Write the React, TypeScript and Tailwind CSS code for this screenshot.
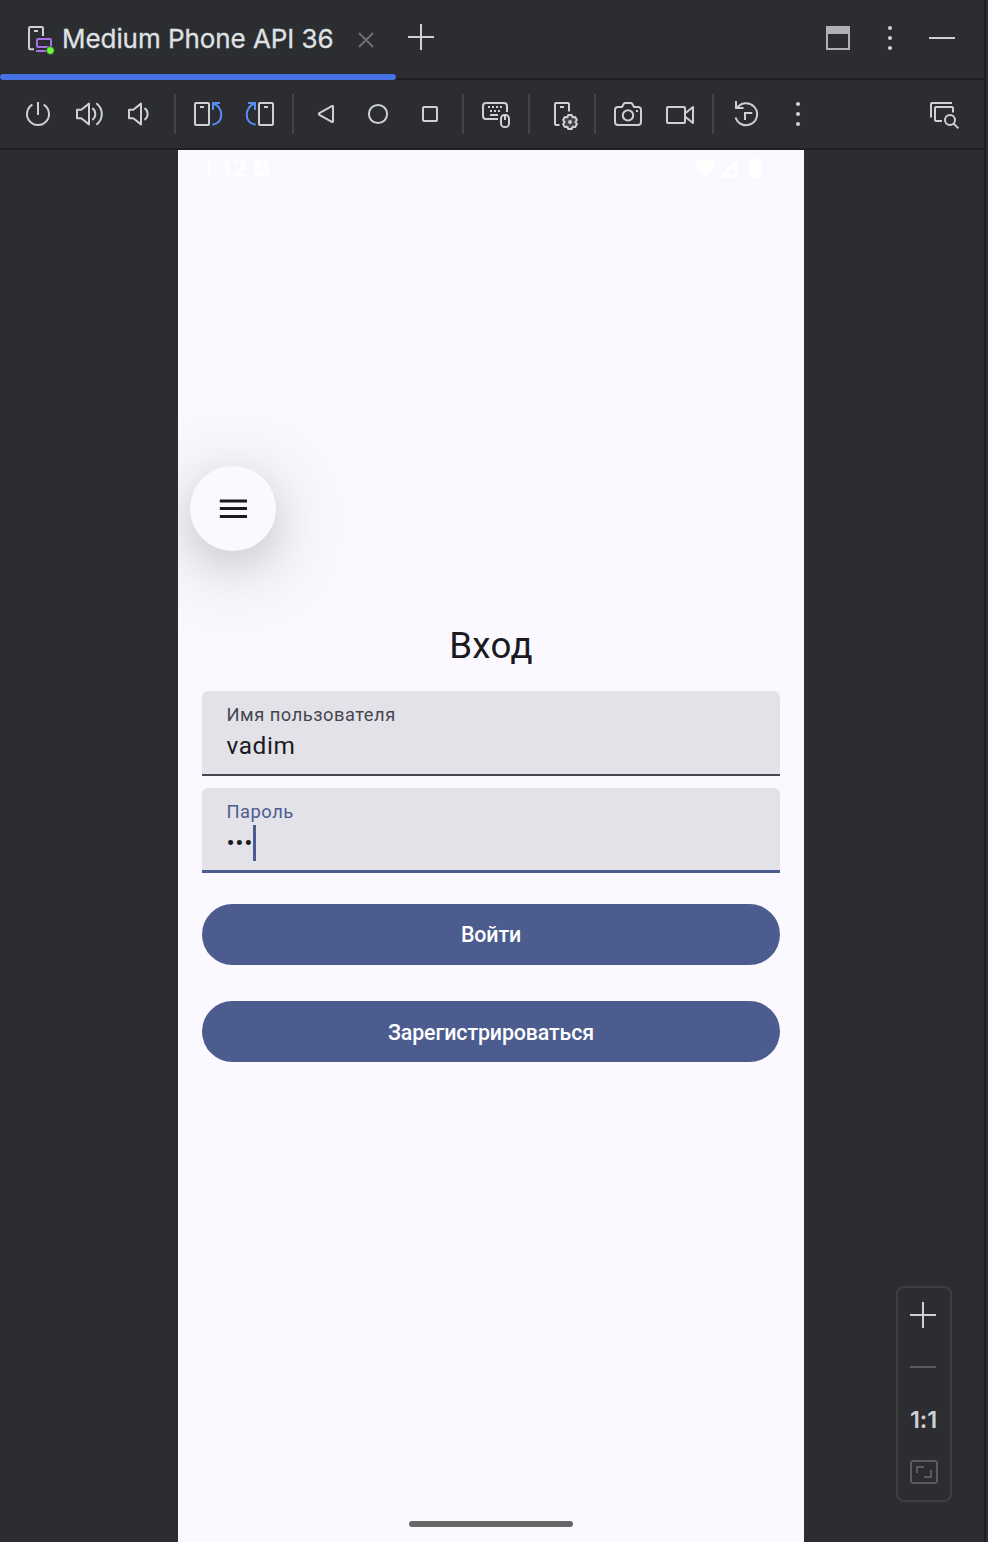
import type { ReactNode } from "react";

function Icon({ children, className = "text-[#ced0d6]" }: { children: ReactNode; className?: string }) {
  return (
    <svg
      viewBox="0 0 32 32"
      fill="none"
      stroke="currentColor"
      strokeWidth="2"
      className={`h-8 w-8 shrink-0 ${className}`}
    >
      {children}
    </svg>
  );
}

function Dots() {
  return (
    <Icon>
      <g fill="currentColor" stroke="none">
        <circle cx="16" cy="6" r="2.1" />
        <circle cx="16" cy="16" r="2.1" />
        <circle cx="16" cy="26" r="2.1" />
      </g>
    </Icon>
  );
}

const Separator = () => <div className="mx-4 h-10 w-[2px] shrink-0 bg-[#43454a]" />;

const Group = ({ children }: { children: ReactNode }) => <div className="flex gap-5">{children}</div>;

function TabBar() {
  return (
    <header className="flex h-20 items-stretch justify-between border-b-2 border-[#1e1f22]">
      <div className="flex">
        <div className="-mb-[2px] flex w-[396px] flex-col">
          <div className="flex h-[74px] items-center pt-1 pl-6">
            <Icon className="mt-[2px] text-[#ced0d6]">
              <path d="M19 12V4.2Q19 3 17.8 3H6.2Q5 3 5 4.2V24Q5 25.2 6.2 25.2H10" />
              <path d="M10 7h4" />
              <g stroke="#a571e6">
                <rect x="13" y="15" width="14" height="8" rx="1.2" />
                <path d="M12 27h10" />
              </g>
              <circle cx="26.3" cy="26.5" r="4" fill="#6cf83c" stroke="#1f3a20" strokeWidth="0.8" />
            </Icon>
            <span className="ml-[6px] w-[272px] font-['Inter'] text-[26px] leading-8 tracking-[-0.06px] whitespace-nowrap text-[#dfe1e5] [-webkit-text-stroke:0.3px_#dfe1e5]">
              Medium Phone API 36
            </span>
            <Icon className="mt-[2px] ml-4 text-[#6f7177]">
              <path d="M9 9l14 14M23 9L9 23" strokeWidth="1.8" />
            </Icon>
          </div>
          <div className="h-[6px] rounded-[3px] bg-[#4573e3]" />
        </div>
        <div className="flex h-[74px] items-center pl-[9px]">
          <Icon>
            <path d="M16 3v26M3 16h26" />
          </Icon>
        </div>
      </div>
      <div className="flex h-[76px] items-center gap-5 pr-[26px]">
        <Icon className="text-[#afb1b3]">
          <path d="M5 5h22v22H5z" />
          <path d="M4 8h24" strokeWidth="8" />
        </Icon>
        <Dots />
        <Icon>
          <path d="M3 16h26" />
        </Icon>
      </div>
    </header>
  );
}

function SpeakerShape() {
  return <path d="M3 11.7H7.3L15 5.6V26.4L7.3 20.3H3Z" strokeLinejoin="round" />;
}

function RotateShape() {
  return (
    <>
      <rect x="3" y="5" width="14" height="22" rx="1" />
      <path d="M8 9h4" />
      <path d="M28 5H21V12M21.5 5.5C31.5 10 32.5 24.5 20.4 26.8" stroke="#5a8cf5" />
    </>
  );
}

function Toolbar() {
  return (
    <div className="flex h-[70px] items-center justify-between border-b-2 border-[#1e1f22] pr-6 pl-[22px]">
      <div className="flex items-center">
        <Group>
          <Icon>
            <path d="M10.4 6.6A11 11 0 1 0 21.6 6.6M16 4v13" />
          </Icon>
          <Icon>
            <SpeakerShape />
            <path d="M18.3 10.2Q21.3 12.2 21.3 16T18.3 21.8M22.3 5.2Q27.8 9.4 27.8 16T22.3 26.8" />
          </Icon>
          <Icon>
            <SpeakerShape />
            <path d="M18.5 10.2Q21.6 12.2 21.6 16T18.5 21.8" />
          </Icon>
        </Group>
        <Separator />
        <Group>
          <Icon>
            <RotateShape />
          </Icon>
          <Icon>
            <g transform="translate(32 0) scale(-1 1)">
              <RotateShape />
            </g>
          </Icon>
        </Group>
        <Separator />
        <Group>
          <Icon>
            <path d="M9.4 15.2L21.8 8.1Q23 7.5 23 8.8V23.2Q23 24.5 21.8 23.9L9.4 16.8Q8.2 16 9.4 15.2Z" />
          </Icon>
          <Icon>
            <circle cx="16" cy="16" r="9.1" />
          </Icon>
          <Icon>
            <rect x="9" y="9" width="14" height="14" rx="1" />
          </Icon>
        </Group>
        <Separator />
        <Icon>
          <path d="M27 14V8Q27 5 24 5H6Q3 5 3 8V18Q3 21 6 21H18" />
          <path d="M8 9h2M12 9h2M16 9h2M20 9h2M10 13h2M14 13h2M18 13h2M10 17h8" />
          <rect x="21" y="17" width="8" height="12" rx="3.6" />
          <path d="M25 18v4" />
        </Icon>
        <Separator />
        <Icon>
          <path d="M23 13.5V6Q23 5 22 5H10Q9 5 9 6V26Q9 27 10 27H13.5M14 9h4" />
          <path
            d="M22.3 17L25.7 17L26.7 19.3L29.2 19L30.9 22L29.4 24L30.9 26L29.2 29L26.7 28.7L25.7 31L22.3 31L21.3 28.7L18.8 29L17.1 26L18.6 24L17.1 22L18.8 19L21.3 19.3Z"
            fill="#43454a"
            strokeWidth="2"
            strokeLinejoin="round"
          />
          <circle cx="24" cy="24" r="1.9" fill="currentColor" stroke="none" />
        </Icon>
        <Separator />
        <Group>
          <Icon>
            <path
              d="M10 9L12 5.6Q12.4 5 13 5H19Q19.6 5 20 5.6L22 9H26Q29 9 29 12V24Q29 27 26 27H6Q3 27 3 24V12Q3 9 6 9Z"
              strokeLinejoin="round"
            />
            <circle cx="16" cy="17.4" r="5.2" />
            <path d="M24 13h2" />
          </Icon>
          <Icon>
            <rect x="3" y="9" width="18" height="16" rx="1" />
            <path d="M21.5 15L29 9V25L21.5 19" strokeLinejoin="round" />
          </Icon>
        </Group>
        <Separator />
        <Group>
          <Icon>
            <path d="M5.6 19.5A11 11 0 1 0 6.8 10.4M6 3V10H13.5M15 22V15H22.3" />
          </Icon>
          <Dots />
        </Group>
      </div>
      <Icon>
        <path d="M3 19.5V6Q3 5 4 5H24M25 14.5V10Q25 9 24 9H8Q7 9 7 10V22Q7 23 8 23H14" />
        <circle cx="22" cy="22" r="5" />
        <path d="M25.6 25.6L30.4 30.4" />
      </Icon>
    </div>
  );
}

function StatusBar() {
  return (
    <div className="flex h-9 items-center justify-between pr-[42px] pl-6 text-white">
      <div className="flex items-center">
        <span className="w-[52px] text-[24px] leading-6 tracking-[-0.7px]">1:12</span>
        <svg viewBox="0 0 16 16" className="h-4 w-4" fill="currentColor">
          <rect x="0.5" y="0.5" width="14" height="15" rx="1.5" />
          <path d="M4.5 12L7.5 4L10.5 12M5.5 9.5h4" fill="none" stroke="#fbf8ff" strokeWidth="1.8" />
        </svg>
      </div>
      <div className="flex items-center">
        <svg viewBox="0 0 24 20" className="h-5 w-6" fill="currentColor">
          <path d="M12 20L0.5 5Q12 -3.5 23.5 5Z" />
        </svg>
        <svg viewBox="0 0 20 20" className="ml-px h-5 w-5" fill="none" stroke="currentColor" strokeWidth="2.4">
          <path d="M17.8 4V18H3.8Z" />
        </svg>
        <svg viewBox="0 0 14 20" className="ml-[10px] h-5 w-[14px]" fill="currentColor">
          <path d="M4 0h5v2h3q1 0 1 1v16q0 1-1 1H2q-1 0-1-1V3q0-1 1-1h2z" />
        </svg>
      </div>
    </div>
  );
}

function LoginScreen() {
  return (
    <main className="flex w-[626px] flex-col overflow-hidden bg-[#fbf8ff] font-['Roboto',sans-serif]">
      <StatusBar />
      <button className="mt-[280px] ml-3 flex h-[85px] w-[86px] shrink-0 items-center justify-center rounded-full bg-[#fbf8ff] shadow-[0_14px_40px_rgba(0,0,0,0.13),0_14px_96px_rgba(0,0,0,0.18)]">
        <svg viewBox="0 0 28 20" className="h-5 w-7" stroke="#1a1b21" strokeWidth="3">
          <path d="M0.8 2.1h27.2M0.8 9.6h27.2M0.8 17.4h27.2" />
        </svg>
      </button>
      <h1 className="mt-[70px] text-center text-[36.7px] leading-[50px] tracking-[0.3px] text-[#1a1b21]">Вход</h1>
      <div className="mt-5 flex flex-col px-6">
        <div className="flex h-[85px] flex-col rounded-t-[6px] border-b-2 border-[#45464f] bg-[#e3e2e8] pt-3 pl-[24.5px]">
          <label className="text-[18.33px] leading-6 tracking-[0.5px] text-[#45464f]">Имя пользователя</label>
          <span className="mt-px text-[24.4px] leading-9 tracking-[0.6px] text-[#1a1b21]">vadim</span>
        </div>
        <div className="mt-3 flex h-[85px] flex-col rounded-t-[6px] border-b-[3px] border-[#4c5c8f] bg-[#e3e2e8] pt-3 pl-[24.5px]">
          <label className="text-[18.33px] leading-6 tracking-[0.5px] text-[#4c5c8f]">Пароль</label>
          <div className="mt-px flex h-9 items-center">
            <span className="w-[26px] text-[24.4px] leading-9 tracking-[0.6px] text-[#1a1b21]">•••</span>
            <span className="h-9 w-[3px] bg-[#4c5c8f]" />
          </div>
        </div>
        <button className="mt-[31px] h-[61px] rounded-full bg-[#4c5c8f] pt-[2px] text-[21.4px] font-medium tracking-[-0.12px] text-white">
          Войти
        </button>
        <button className="mt-[36.4px] h-[61px] rounded-full bg-[#4c5c8f] pt-[2px] text-[21.4px] font-medium tracking-[-0.12px] text-white">
          Зарегистрироваться
        </button>
      </div>
      <div className="mt-auto mb-[15px] h-[6px] w-[164px] self-center rounded-full bg-[#666666]" />
    </main>
  );
}

function ZoomControls() {
  return (
    <div className="mr-8 mb-10 flex h-[216px] w-14 flex-col items-center gap-5 self-end rounded-[8px] border-2 border-[#3d3f41] pt-[11px]">
      <Icon className="-ml-[2px] text-[#ced0d6]">
        <path d="M16 3v26M3 16h26" />
      </Icon>
      <Icon className="-ml-[2px] text-[#5a5c5e]">
        <path d="M3 16h26" />
      </Icon>
      <span className="-ml-px h-8 pt-px font-['Inter'] text-[23.5px] leading-8 font-semibold tracking-[-0.1px] text-[#ced0d6]">
        1:1
      </span>
      <Icon className="mt-px text-[#5a5c5e]">
        <rect x="3" y="5" width="26" height="22" rx="2.5" />
        <path d="M9 17V11H16M16 21H23V14" />
      </Icon>
    </div>
  );
}

export default function App() {
  return (
    <div className="flex h-[1542px] w-[988px] bg-[#2b2d30]">
      <div className="flex w-[986px] flex-col border-r-2 border-[#1e1f22]">
        <TabBar />
        <Toolbar />
        <div className="flex flex-1 pl-[178px]">
          <LoginScreen />
          <div className="flex flex-1 flex-col justify-end">
            <ZoomControls />
          </div>
        </div>
      </div>
    </div>
  );
}
